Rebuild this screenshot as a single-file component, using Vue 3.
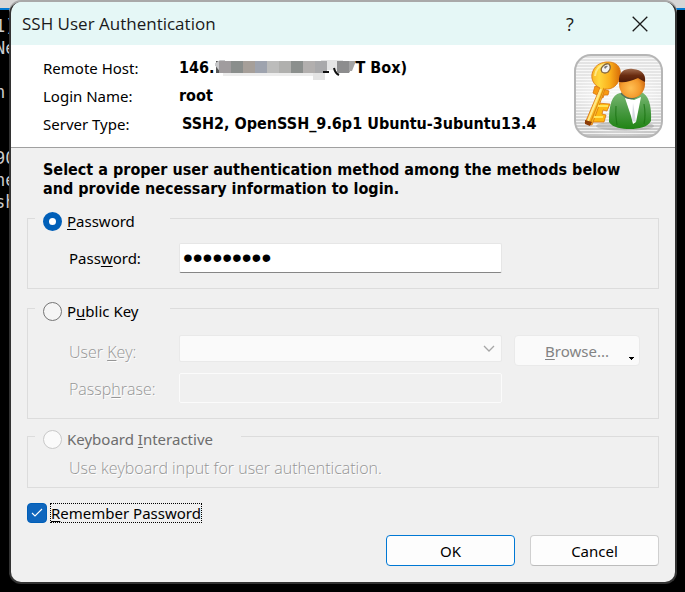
<script setup>
import { ref } from 'vue'

const method = ref('password')
const password = ref('secretpwd')
const remember = ref(true)
const mosaic = ['#a09c9e', '#8a8e8c', '#a69f99', '#9ea3ae', '#bcbcbb', '#b0b0ae', '#8b8f8d', '#b2afae', '#a9a9ab']
</script>

<template>
  <div class="desktop">
    <div class="terminal" aria-hidden="true">
      <span>1)</span><span>Ne</span><span></span><span>n</span><span></span><span></span><span>90</span><span>ne</span><span>sh</span>
    </div>
    <main class="dialog">
      <header class="titlebar">
        <h1>SSH User Authentication</h1>
        <button type="button" class="cap" aria-label="Help">?</button>
        <button type="button" class="cap" aria-label="Close">
          <svg width="16" height="16" viewBox="0 0 16 16"><path d="M.7.7 15.3 15.3M15.3.7.7 15.3" stroke="#1a1a1a" stroke-width="1.3" fill="none" /></svg>
        </button>
      </header>

      <section class="summary">
        <dl>
          <dt>Remote Host:</dt>
          <dd class="host">
            <span>146.</span>
            <svg width="141" height="24" viewBox="0 0 141 24">
              <path d="M1 5h3v12H1z" fill="#555" />
              <path d="M-1 8 5 4h5v13H6z" fill="#c8c8ca" />
              <path d="M8 16h90v4H8z" fill="#ececec" />
              <path d="M98 13h12v12H98zM106 4h22v10h-22z" fill="#e4e4e4" />
              <rect v-for="(c, i) in mosaic" :key="i" :x="4 + i * 12" y="5" width="12" height="12" :fill="c" />
              <path d="M108 15h6v2h-6z" fill="#111" />
              <path d="M119 12q1 5 5 7" fill="none" stroke="#111" stroke-width="2" />
              <path d="M122 5h19l-7 12h-12z" fill="#8d8d8e" />
              <path d="M134 5h7l-4 10h-3z" fill="#a3a3a4" />
            </svg>
            <span>T Box)</span>
          </dd>
          <dt>Login Name:</dt>
          <dd>root</dd>
          <dt>Server Type:</dt>
          <dd class="server">SSH2, OpenSSH_9.6p1 Ubuntu-3ubuntu13.4</dd>
        </dl>
        <svg class="badge" width="89" height="84" viewBox="0 0 89 84" aria-hidden="true">
          <defs>
            <linearGradient id="plate" x1="0" y1="0" x2="0" y2="1">
              <stop offset="0" stop-color="#e2e2e2" /><stop offset=".5" stop-color="#e9e9e9" /><stop offset="1" stop-color="#c4c4c4" />
            </linearGradient>
            <radialGradient id="glow" cx=".5" cy=".55" r=".5">
              <stop offset="0" stop-color="#fff" stop-opacity=".8" /><stop offset="1" stop-color="#fff" stop-opacity="0" />
            </radialGradient>
            <pattern id="lines" width="4" height="3" patternUnits="userSpaceOnUse"><path d="M0 1h4v1H0z" fill="#fff" opacity=".75" /></pattern>
            <linearGradient id="gold" x1="0" y1="0" x2="1" y2="0">
              <stop offset="0" stop-color="#f49a10" /><stop offset=".4" stop-color="#ffd63c" /><stop offset=".7" stop-color="#fbb01c" /><stop offset="1" stop-color="#d86c08" />
            </linearGradient>
            <radialGradient id="skin" cx=".45" cy=".65" r=".6">
              <stop offset="0" stop-color="#ffc054" /><stop offset=".6" stop-color="#f49a2c" /><stop offset="1" stop-color="#c86410" />
            </radialGradient>
            <linearGradient id="hair" x1="0" y1="0" x2="0" y2="1">
              <stop offset="0" stop-color="#a06a4c" /><stop offset=".5" stop-color="#6a2c10" /><stop offset="1" stop-color="#4c1a08" />
            </linearGradient>
            <linearGradient id="coat" x1="0" y1="0" x2="0" y2="1">
              <stop offset="0" stop-color="#7cba74" /><stop offset=".5" stop-color="#4a9a44" /><stop offset="1" stop-color="#208414" />
            </linearGradient>
          </defs>
          <rect x="1" y="1" width="87" height="82" rx="16" fill="url(#plate)" />
          <rect x="1" y="1" width="87" height="82" rx="16" fill="url(#lines)" />
          <rect x="1" y="1" width="87" height="82" rx="16" fill="url(#glow)" />
          <rect x="1" y="1" width="87" height="82" rx="16" fill="none" stroke="#b6b6b6" stroke-width="2" />
          <ellipse cx="51" cy="72" rx="29" ry="5" fill="#777" opacity=".3" />
          <g stroke="#d87410" stroke-width=".8" stroke-linejoin="round">
            <path d="M23 49 36 50 33 57 29 56 28 60 32 61 30 68 16 68z" fill="#fdb813" />
            <path d="M21 32 35 37 34 41 30 41 29 44 19 39z" fill="#f79a12" />
            <path d="M32 8C42 7 48 13 46 22 45 31 38 36 31 35L18 71 11 69 26 34C20 31 17 26 18 20 20 12 25 9 32 8z" fill="url(#gold)" />
          </g>
          <path d="M30 34 16 70" stroke="#e08a10" stroke-width="1.2" />
          <path d="M27 35 14 67M21 22Q22 12 32 10" stroke="#ffe886" stroke-width="2" fill="none" />
          <path d="M24 52 34 52M20 63 29 63" stroke="#ffe45a" stroke-width="2" />
          <path d="M11 66 18 68 16 72 11 70z" fill="#8c3c08" />
          <path d="M29 12q3-3 6-2 3 4-1 8-3 2-6 0-2-3 1-6z" fill="#f2f2f2" stroke="#86683c" stroke-width="1.3" />
          <path d="M30 13q2-2 4-1l-3 3z" fill="#777" />
          <path d="M46 39C38 41 35 50 35 68 39 74 48 75 56 75 65 75 74 73 77 67 78 51 74 40 67 38Q58 47 46 39z" fill="url(#coat)" />
          <path d="M42 52Q41 61 43 71M70 50Q72 61 70 70" stroke="#187010" stroke-width="1.2" fill="none" opacity=".7" />
          <path d="M51 44 60 46 67 43 62 68 59 70 57 62z" fill="#fff" />
          <path d="M59 49 62 68 58 67z" fill="#d8dce4" />
          <path d="M47 39Q58 50 67 38" stroke="#54705a" stroke-width="2" fill="none" />
          <ellipse cx="58" cy="30" rx="13" ry="14" fill="url(#skin)" />
          <path d="M45 28C44 17 52 14 59 15 68 16 72 20 71 28Q67 26 64 24 54 29 45 28z" fill="url(#hair)" />
        </svg>
      </section>

      <form class="body" @submit.prevent>
        <p class="lead">Select a proper user authentication method among the methods below<br>and provide necessary information to login.</p>

        <fieldset class="g1">
          <legend class="short"><label><input v-model="method" type="radio" name="method" value="password"><span><u>P</u>assword</span></label></legend>
          <div class="fields">
            <label for="pw">Pass<u>w</u>ord:</label>
            <input id="pw" v-model="password" class="box" type="password">
          </div>
        </fieldset>

        <fieldset class="g2">
          <legend class="short"><label><input v-model="method" type="radio" name="method" value="key"><span>P<u>u</u>blic Key</span></label></legend>
          <div class="fields">
            <label for="key" class="off">User <u>K</u>ey:</label>
            <div class="combo">
              <select id="key" disabled><option></option></select>
              <svg width="12" height="8" viewBox="0 0 12 8"><path d="m1 1 5 5 5-5" fill="none" stroke="#a6a6a6" stroke-width="1.3" /></svg>
            </div>
            <button type="button" class="btn browse" disabled>
              <span><u>B</u>rowse...</span>
              <svg width="5" height="3" viewBox="0 0 5 3"><path d="M0 0h5v1H4v1H3v1H2V2H1V1H0z" fill="#000" /></svg>
            </button>
            <label for="phrase" class="off">Passp<u>h</u>rase:</label>
            <input id="phrase" class="box" type="password" disabled>
          </div>
        </fieldset>

        <fieldset class="g3">
          <legend class="long"><label class="dim"><input type="radio" name="method" value="keyboard" disabled><span>Keyboard <u>I</u>nteractive</span></label></legend>
          <p class="off">Use keyboard input for user authentication.</p>
        </fieldset>

        <label class="remember">
          <input v-model="remember" type="checkbox">
          <svg v-show="remember" width="12" height="10" viewBox="0 0 12 10"><path d="m1 5 3 3 7-7" fill="none" stroke="#fff" stroke-width="1.1" /></svg>
          <span><u>R</u>emember Password</span>
        </label>

        <footer>
          <button type="submit" class="btn primary">OK</button>
          <button type="button" class="btn">Cancel</button>
        </footer>
      </form>
    </main>
  </div>
</template>

<style>
body { margin: 0; background: #000; }
</style>

<style scoped>
* { box-sizing: border-box; }
.desktop {
  position: relative;
  min-height: 100vh;
  padding: 2px 8px 8px 9px;
  display: flex;
  overflow: hidden;
  background: linear-gradient(#d6d6d6 8px, #0078d0 8px, #0078d0 10px, #000 10px);
  font: 15px/20px "Noto Sans", "Open Sans", sans-serif;
  color: #000;
}
.terminal {
  position: absolute;
  top: 15px;
  left: -5px;
  display: grid;
  grid-auto-rows: 22px;
  color: #ccc;
  font: 17px/22px "DejaVu Sans Mono", monospace;
}
.dialog {
  position: relative;
  flex: 1;
  min-width: 0;
  display: flex;
  flex-direction: column;
  border: 2px solid #333;
  border-top: 0;
  border-radius: 12px;
  overflow: hidden;
  background: #f0f0f0;
  box-shadow: 0 -2px 0 #a9a9a9;
}
.titlebar { display: flex; align-items: center; height: 43px; padding-left: 11px; background: #e5f7f6; }
h1 { flex: 1; margin: 0; font: 17px/24px "Open Sans", sans-serif; color: #1a1a1a; }
.cap { display: grid; place-items: center; width: 70px; height: 40px; padding: 0; border: 0; background: none; font: 18px/24px "Open Sans", sans-serif; color: #1a1a1a; }
.summary { display: flex; align-items: center; padding: 9px 12px 9px 32px; background: #fff; border-bottom: 1px solid #a0a0a0; }
dl { flex: 1; margin: 0; display: grid; grid-template-columns: 136px 1fr; line-height: 28px; }
dd { margin: 0; font-family: "DejaVu Sans Condensed", sans-serif; font-size: 16px; font-weight: 700; white-space: nowrap; }
.host { display: flex; align-items: center; }
.server { padding-left: 3px; }
.badge { flex: none; }
.body { flex: 1; padding: 12px 16px 14px; }
p { margin: 0; }
.lead { padding-left: 16px; margin-bottom: 7px; font: 700 16px/19px "DejaVu Sans Condensed", sans-serif; }
fieldset { min-width: 0; margin: 0; border: 1px solid #dcdcdc; padding: 0 18px 15px 41px; }
.g1 { padding-top: 12px; }
.g2 { margin-top: 6px; padding-top: 14px; }
.g3 { margin-top: 4px; padding-top: 9px; padding-bottom: 9px; }
legend { height: 26px; margin-left: -34px; padding: 6px 0 0 8px; }
.short { width: 135px; }
.long { width: 206px; }
legend label { display: flex; align-items: center; gap: 5px; }
input[type="radio"] { appearance: none; flex: none; width: 19px; height: 19px; margin: 0; border: 1px solid #757575; border-radius: 50%; background: #f5f5f5; }
input[type="radio"]:checked { border: 6px solid #005fb8; background: #fff; }
input[type="radio"]:disabled { border-color: #c8c8c8; background: #fafafa; }
u { text-underline-offset: 2px; text-decoration-thickness: 1px; }
.fields { display: grid; grid-template-columns: 110px 1fr 138px; row-gap: 7px; align-items: center; }
.box { width: 100%; height: 30px; min-width: 0; margin: 0; border: 1px solid #e6e6e6; border-bottom-color: #868686; border-radius: 2px; padding: 0 3px; background: #fff; font: 28px/28px "Liberation Sans", sans-serif; color: #000; outline: 0; }
.box:disabled { background: #f0f0f0; border-color: #fbfbfb; }
.combo { height: 27px; align-self: start; display: grid; align-items: center; }
.combo select, .combo svg { grid-area: 1 / 1; }
.combo svg { justify-self: end; margin-right: 7px; z-index: 1; pointer-events: none; }
select { appearance: none; width: 100%; height: 27px; border: 1px solid #e9e9e9; border-radius: 2px; background: #fafafa; opacity: 1; }
.off { color: #969696; font: 300 16px/20px "Open Sans", sans-serif; text-shadow: 1px 1px 0 #fff; }
.fields .off { padding-top: 2px; }
.dim { color: #6d6d6d; }
.btn { height: 31px; width: 129px; padding: 0; border: 1px solid #d0d0d0; border-bottom-color: #bcbcbc; border-radius: 4px; background: #fdfdfd; font: inherit; color: #000; }
.primary { border-color: #0078d4; }
.browse { display: grid; align-items: center; justify-self: end; width: 126px; border-color: #eaeaea; background: #fafafa; color: #838383; }
.browse > * { grid-area: 1 / 1; }
.browse svg { place-self: end; margin: 0 5px 5px 0; }
.remember { display: grid; grid-template-columns: 20px auto; column-gap: 3px; width: max-content; margin-top: 15px; align-items: center; }
.remember input { grid-area: 1 / 1; appearance: none; width: 20px; height: 20px; margin: 0; border: 1px solid #005fb8; border-radius: 4px; background: #fff; }
.remember input:checked { background: #0f66bd; }
.remember svg { grid-area: 1 / 1; place-self: center; z-index: 1; pointer-events: none; }
.remember span { grid-column: 2; outline: 1px dotted #000; outline-offset: -1px; padding: 0 1px; }
footer { display: flex; justify-content: flex-end; gap: 15px; margin-top: 12px; }
</style>
